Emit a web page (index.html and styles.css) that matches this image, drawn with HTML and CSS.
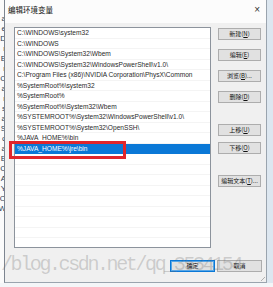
FILE: index.html
```html
<!DOCTYPE html>
<html lang="zh-CN">
<head>
  <meta charset="UTF-8">
  <title>编辑环境变量</title>
  <link rel="stylesheet" href="styles.css">
</head>
<body>
  <div class="screen">
    <div class="side-left">
      <span>a</span><span>e</span><span>D</span><span>r</span><span>E</span><span>r</span><span>C</span><span>a</span><span>r</span><span>s</span><span>a</span><span>S</span><span>c</span><span>a</span><span>E</span><span>C</span><span>A</span><span>Y</span><span>O</span><span>W</span>
    </div>

    <div class="dialog">
      <div class="titlebar">
        <span class="title">编辑环境变量</span>
        <span class="close">×</span>
      </div>

      <div class="content">
        <div class="list">
          <div class="row">C:\WINDOWS\system32</div>
          <div class="row">C:\WINDOWS</div>
          <div class="row">C:\WINDOWS\System32\Wbem</div>
          <div class="row">C:\WINDOWS\System32\WindowsPowerShell\v1.0\</div>
          <div class="row">C:\Program Files (x86)\NVIDIA Corporation\PhysX\Common</div>
          <div class="row">%SystemRoot%\system32</div>
          <div class="row">%SystemRoot%</div>
          <div class="row">%SystemRoot%\System32\Wbem</div>
          <div class="row">%SYSTEMROOT%\System32\WindowsPowerShell\v1.0\</div>
          <div class="row">%SYSTEMROOT%\System32\OpenSSH\</div>
          <div class="row">%JAVA_HOME%\bin</div>
          <div class="row selected">%JAVA_HOME%\jre\bin</div>
          <div class="row"></div>
          <div class="row"></div>
          <div class="row"></div>
          <div class="row"></div>
          <div class="row"></div>
          <div class="row"></div>
          <div class="row"></div>
          <div class="row"></div>
        </div>

        <div class="actions">
          <button class="btn first">新建(<u>N</u>)</button>
          <button class="btn">编辑(<u>E</u>)</button>
          <button class="btn">浏览(<u>B</u>)...</button>
          <button class="btn">删除(<u>D</u>)</button>
          <button class="btn group">上移(<u>U</u>)</button>
          <button class="btn tight">下移(<u>O</u>)</button>
          <button class="btn group">编辑文本(<u>T</u>)...</button>
        </div>
      </div>

      <div class="footer">
        <button class="btn wide default">确定</button>
        <button class="btn wide">取消</button>
      </div>

      <div class="mark"></div>
      <div class="grip"></div>
    </div>

    <div class="side-right"></div>
  </div>

  <div class="watermark">/blog.csdn.net/qq_3534154</div>
</body>
</html>
```

FILE: styles.css
```css
body {
  margin: 0;
  padding: 0;
  width: 273px;
  height: 287px;
  overflow: hidden;
  font-family: "Liberation Sans", "Noto Sans CJK SC", sans-serif;
  background-color: #f4f6f8;
  position: relative;
}
.screen {
  display: flex;
  height: 283px;
}
.side-left {
  width: 4px;
  overflow: hidden;
  display: flex;
  flex-direction: column;
  align-items: flex-end;
  padding-top: 14px;
  background-color: #fbfbfb;
  font-size: 8px;
  line-height: 10px;
  color: #2d3b55;
}
.side-left span {
  margin-right: -2px;
}
.dialog {
  position: relative;
  width: 261px;
  display: flex;
  flex-direction: column;
  background-color: #f0f0f0;
  border-left: 1px solid #7d8590;
  border-right: 1px solid #9aa4ae;
  border-bottom: 1px solid #9aa4ae;
}
.titlebar {
  height: 23px;
  display: flex;
  align-items: center;
  justify-content: space-between;
  padding: 0 6px 4px 3px;
  box-sizing: border-box;
  background-color: #fcfcfc;
}
.title {
  font-family: "Noto Sans CJK SC", sans-serif;
  font-size: 7.5px;
  color: #111;
}
.close {
  font-size: 10px;
  color: #333;
}
.content {
  display: flex;
  gap: 7px;
  padding: 4px 5px 0 9px;
}
.list {
  width: 195px;
  height: 219px;
  border: 1px solid #8c939c;
  background-color: #fff;
  overflow: hidden;
}
.row {
  height: 10.5px;
  line-height: 10.5px;
  padding-left: 2px;
  font-size: 6.6px;
  color: #2a2a2a;
  white-space: nowrap;
  border-bottom: 1px solid #f4f4f4;
  box-sizing: border-box;
}
.row.selected {
  background-color: #0a78d7;
  color: #fff;
  border-bottom-color: #0a78d7;
}
.actions {
  display: flex;
  flex-direction: column;
  gap: 9px;
  width: 43px;
}
.btn {
  height: 12px;
  padding: 0;
  margin: 0;
  border: 1px solid #adadad;
  background-color: #e1e1e1;
  font-family: "Noto Sans CJK SC", sans-serif;
  font-size: 6px;
  line-height: 10px;
  color: #111;
  box-sizing: border-box;
}
.btn.first {
  margin-top: 1px;
}
.btn.group {
  margin-top: 12px;
}
.btn.tight {
  margin-top: -3px;
}
.footer {
  display: flex;
  justify-content: flex-end;
  gap: 2px;
  padding: 12px 4px 0 0;
}
.btn.wide {
  width: 45px;
}
.btn.default {
  border-color: #0a78d7;
  box-shadow: inset 0 0 0 1px #5aa7e6;
}
.mark {
  position: absolute;
  left: 4px;
  top: 141px;
  width: 117px;
  height: 18px;
  border: 3px solid #e0262b;
  box-sizing: border-box;
}
.grip {
  position: absolute;
  right: 1px;
  bottom: 1px;
  width: 5px;
  height: 5px;
  background: linear-gradient(135deg, transparent 55%, #b0b0b0 55%, #b0b0b0 65%, transparent 65%);
}
.side-right {
  flex: 1;
  background-color: #dde7f0;
}
.watermark {
  position: absolute;
  left: 1px;
  top: 253px;
  font-family: "Liberation Mono", monospace;
  font-size: 20px;
  letter-spacing: -2.4px;
  color: rgba(110, 110, 110, 0.28);
  white-space: nowrap;
  pointer-events: none;
}
```
